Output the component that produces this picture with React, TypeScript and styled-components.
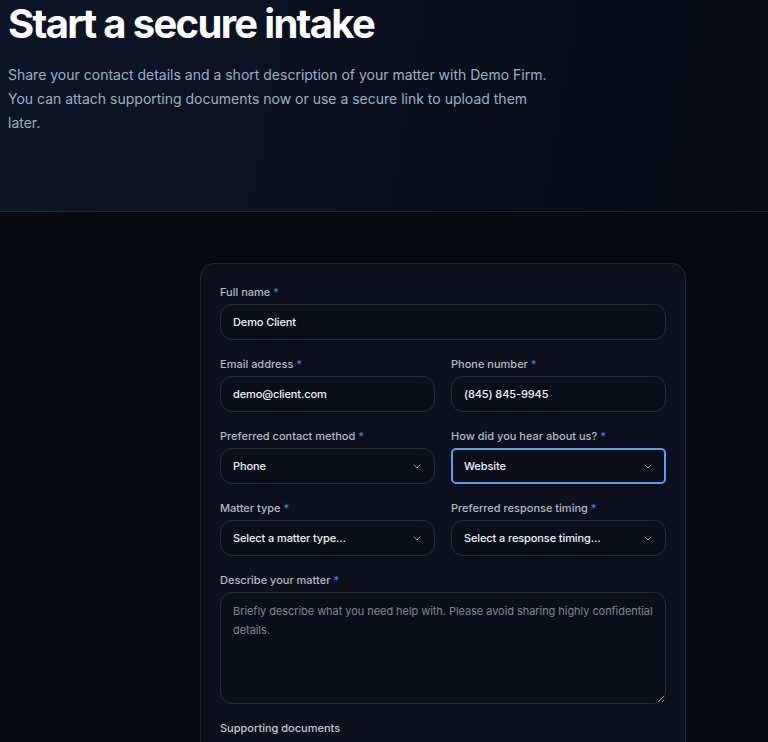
import styled, { createGlobalStyle } from 'styled-components';

const GlobalStyle = createGlobalStyle`
  html, body {
    margin: 0;
    padding: 0;
    background: #070a12;
    font-family: Inter, "Noto Sans", sans-serif;
    color: #e8ecf3;
  }
  * { box-sizing: border-box; }
`;

const Page = styled.div`
  min-height: 742px;
  background: #070a12;
  overflow: hidden;
`;

const Hero = styled.header`
  height: 212px;
  padding: 2px 8px 0;
  background: linear-gradient(100deg, #0c1528 0%, #0a1020 45%, #080b15 100%);
  border-bottom: 1px solid #1f2637;
`;

const Title = styled.h1`
  margin: 0;
  font-size: 40px;
  line-height: 44px;
  font-weight: 700;
  letter-spacing: -0.042em;
  color: #ffffff;
`;

const Intro = styled.p`
  margin: 17px 0 0;
  max-width: 552px;
  font-size: 14px;
  line-height: 24px;
  color: #9eafc6;
`;

const Main = styled.main`
  display: flex;
  padding: 51px 0 0 200px;
`;

const Card = styled.form`
  width: 486px;
  padding: 20px 19px 24px;
  background: #0b101c;
  border: 1px solid #1f2636;
  border-radius: 14px;
  display: flex;
  flex-direction: column;
  gap: 16px;
`;

const Row = styled.div`
  display: grid;
  grid-template-columns: 1fr 1fr;
  gap: 16px;
`;

const Field = styled.label`
  display: flex;
  flex-direction: column;
  gap: 4px;
`;

const Label = styled.span`
  font-size: 11px;
  line-height: 16px;
  font-weight: 500;
  color: #b3bac6;
`;

const Required = styled.span`
  color: #3b82f6;
  margin-left: 3px;
`;

const TextInput = styled.input`
  height: 36px;
  width: 100%;
  padding: 0 12px;
  border: 1px solid #232a3b;
  border-radius: 12px;
  background: #0a0e19;
  color: #eef1f6;
  font-family: inherit;
  font-size: 11px;
  font-weight: 500;
  letter-spacing: -0.01em;
  outline: none;
`;

const SelectWrap = styled.div`
  position: relative;
`;

const Select = styled.select<{ $focused?: boolean }>`
  appearance: none;
  height: 36px;
  width: 100%;
  padding: 0 30px 0 ${({ $focused }) => ($focused ? '11px' : '12px')};
  border: ${({ $focused }) => ($focused ? '2px solid #5b9cf0' : '1px solid #232a3b')};
  border-radius: ${({ $focused }) => ($focused ? '5px' : '12px')};
  background: #0a0e19;
  color: #eef1f6;
  font-family: inherit;
  font-size: 11px;
  font-weight: 500;
  letter-spacing: -0.01em;
  outline: none;
`;

const Chevron = styled.svg`
  position: absolute;
  right: 14px;
  top: 16px;
  pointer-events: none;
`;

const TextArea = styled.textarea`
  height: 112px;
  width: 100%;
  padding: 9px 12px;
  border: 1px solid #232a3b;
  border-radius: 12px;
  background: #0a0e19;
  color: #eef1f6;
  font-family: inherit;
  font-size: 11px;
  line-height: 19px;
  letter-spacing: -0.005em;
  outline: none;
  resize: vertical;

  &::placeholder {
    color: #7f8797;
  }
`;

const SectionLabel = styled.span`
  font-size: 11px;
  line-height: 16px;
  font-weight: 500;
  color: #c3c9d3;
`;

const ChevronIcon = () => (
  <Chevron width="8" height="5" viewBox="0 0 8 5" fill="none">
    <path d="M1 1l3 3 3-3" stroke="#9aa3b2" strokeWidth="1" strokeLinecap="round" strokeLinejoin="round" />
  </Chevron>
);

interface DropdownProps {
  value: string;
  options: string[];
  focused?: boolean;
}

const Dropdown = ({ value, options, focused }: DropdownProps) => (
  <SelectWrap>
    <Select $focused={focused} defaultValue={value}>
      {options.map((o) => (
        <option key={o}>{o}</option>
      ))}
    </Select>
    <ChevronIcon />
  </SelectWrap>
);

const FieldLabel = ({ text, required = true }: { text: string; required?: boolean }) => (
  <Label>
    {text}
    {required && <Required>*</Required>}
  </Label>
);

export default function App() {
  return (
    <Page>
      <GlobalStyle />
      <Hero>
        <Title>Start a secure intake</Title>
        <Intro>
          Share your contact details and a short description of your matter with Demo Firm.
          You can attach supporting documents now or use a secure link to upload them later.
        </Intro>
      </Hero>
      <Main>
        <Card onSubmit={(e) => e.preventDefault()}>
          <Field>
            <FieldLabel text="Full name" />
            <TextInput defaultValue="Demo Client" />
          </Field>
          <Row>
            <Field>
              <FieldLabel text="Email address" />
              <TextInput type="email" defaultValue="demo@client.com" />
            </Field>
            <Field>
              <FieldLabel text="Phone number" />
              <TextInput defaultValue="(845) 845-9945" />
            </Field>
          </Row>
          <Row>
            <Field>
              <FieldLabel text="Preferred contact method" />
              <Dropdown value="Phone" options={['Phone', 'Email', 'Text message']} />
            </Field>
            <Field>
              <FieldLabel text="How did you hear about us?" />
              <Dropdown value="Website" options={['Website', 'Referral', 'Search engine']} focused />
            </Field>
          </Row>
          <Row>
            <Field>
              <FieldLabel text="Matter type" />
              <Dropdown value="Select a matter type…" options={['Select a matter type…', 'Family', 'Business']} />
            </Field>
            <Field>
              <FieldLabel text="Preferred response timing" />
              <Dropdown
                value="Select a response timing…"
                options={['Select a response timing…', 'Today', 'This week']}
              />
            </Field>
          </Row>
          <Field>
            <FieldLabel text="Describe your matter" />
            <TextArea placeholder="Briefly describe what you need help with. Please avoid sharing highly confidential details." />
          </Field>
          <SectionLabel>Supporting documents</SectionLabel>
        </Card>
      </Main>
    </Page>
  );
}
